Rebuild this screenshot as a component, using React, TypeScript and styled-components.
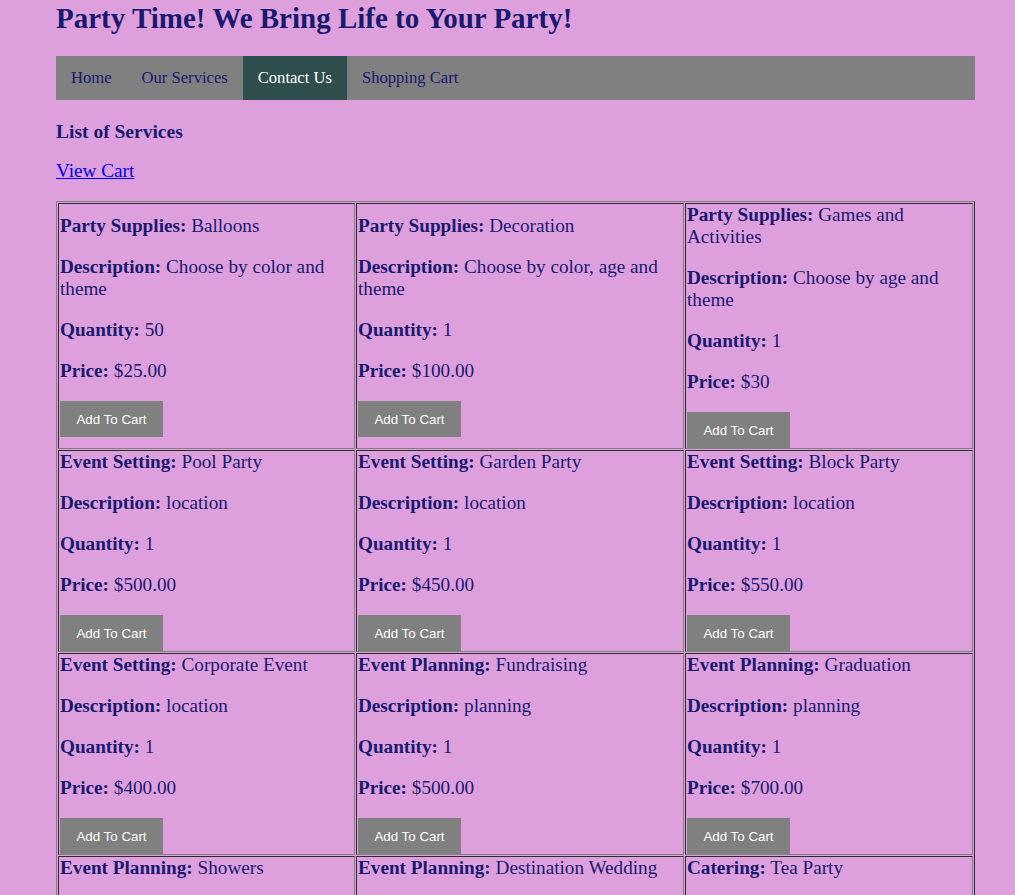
import React from "react";
import styled, { createGlobalStyle } from "styled-components";

const GlobalStyle = createGlobalStyle`
  html, body {
    margin: 0;
    padding: 0;
    background: plum;
  }
  body {
    font-family: "Liberation Serif", "Times New Roman", serif;
    color: midnightblue;
  }
`;

type Service = {
  category: string;
  name: string;
  description: string;
  quantity: number;
  price: string;
};

const services: Service[] = [
  { category: "Party Supplies", name: "Balloons", description: "Choose by color and theme", quantity: 50, price: "$25.00" },
  { category: "Party Supplies", name: "Decoration", description: "Choose by color, age and theme", quantity: 1, price: "$100.00" },
  { category: "Party Supplies", name: "Games and Activities", description: "Choose by age and theme", quantity: 1, price: "$30" },
  { category: "Event Setting", name: "Pool Party", description: "location", quantity: 1, price: "$500.00" },
  { category: "Event Setting", name: "Garden Party", description: "location", quantity: 1, price: "$450.00" },
  { category: "Event Setting", name: "Block Party", description: "location", quantity: 1, price: "$550.00" },
  { category: "Event Setting", name: "Corporate Event", description: "location", quantity: 1, price: "$400.00" },
  { category: "Event Planning", name: "Fundraising", description: "planning", quantity: 1, price: "$500.00" },
  { category: "Event Planning", name: "Graduation", description: "planning", quantity: 1, price: "$700.00" },
  { category: "Event Planning", name: "Showers", description: "planning", quantity: 1, price: "$300.00" },
  { category: "Event Planning", name: "Destination Wedding", description: "planning", quantity: 1, price: "$1500.00" },
  { category: "Catering", name: "Tea Party", description: "food", quantity: 1, price: "$200.00" },
];

const navItems = ["Home", "Our Services", "Contact Us", "Shopping Cart"];

const Page = styled.div`
  width: 919px;
  margin-left: 56px;
`;

const Title = styled.h1`
  margin: 0 0 20px;
  font-size: 29px;
  line-height: 36px;
  font-weight: bold;
`;

const NavBar = styled.nav`
  display: flex;
  background: gray;
  height: 44px;
`;

const NavLink = styled.a<{ $active?: boolean }>`
  display: block;
  padding: 0 15px;
  line-height: 44px;
  font-size: 16.6px;
  color: ${(p) => (p.$active ? "white" : "midnightblue")};
  background: ${(p) => (p.$active ? "darkslategray" : "transparent")};
  text-decoration: none;
  cursor: pointer;
`;

const SectionTitle = styled.h3`
  margin: 21px 0 0;
  font-size: 19.5px;
  line-height: 22px;
`;

const CartLink = styled.a`
  display: inline-block;
  margin-top: 17px;
  font-size: 19.2px;
  line-height: 22px;
  color: #0000ee;
  text-decoration: underline;
  cursor: pointer;
`;

const Grid = styled.div`
  display: grid;
  grid-template-columns: 297px 328px 288px;
  gap: 1px;
  padding: 1px;
  margin-top: 19px;
  border: 1px outset gray;
`;

const Cell = styled.div`
  display: flex;
  flex-direction: column;
  justify-content: center;
  gap: 19px;
  padding: 0 1px;
  border: 1px inset gray;
  font-size: 19.2px;
  line-height: 22px;
`;

const Line = styled.div``;

const Label = styled.b`
  font-weight: bold;
`;

const AddButton = styled.button`
  align-self: flex-start;
  width: 103px;
  height: 36px;
  padding: 0;
  border: none;
  background: gray;
  color: white;
  font-family: "Liberation Sans", Arial, sans-serif;
  font-size: 13.33px;
  cursor: pointer;
`;

const App: React.FC = () => {
  return (
    <>
      <GlobalStyle />
      <Page>
        <Title>Party Time! We Bring Life to Your Party!</Title>
        <NavBar>
          {navItems.map((item) => (
            <NavLink key={item} $active={item === "Contact Us"}>
              {item}
            </NavLink>
          ))}
        </NavBar>
        <SectionTitle>List of Services</SectionTitle>
        <CartLink>View Cart</CartLink>
        <Grid>
          {services.map((s) => (
            <Cell key={s.name}>
              <Line>
                <Label>{s.category}:</Label> {s.name}
              </Line>
              <Line>
                <Label>Description:</Label> {s.description}
              </Line>
              <Line>
                <Label>Quantity:</Label> {s.quantity}
              </Line>
              <Line>
                <Label>Price:</Label> {s.price}
              </Line>
              <AddButton>Add To Cart</AddButton>
            </Cell>
          ))}
        </Grid>
      </Page>
    </>
  );
};

export default App;
